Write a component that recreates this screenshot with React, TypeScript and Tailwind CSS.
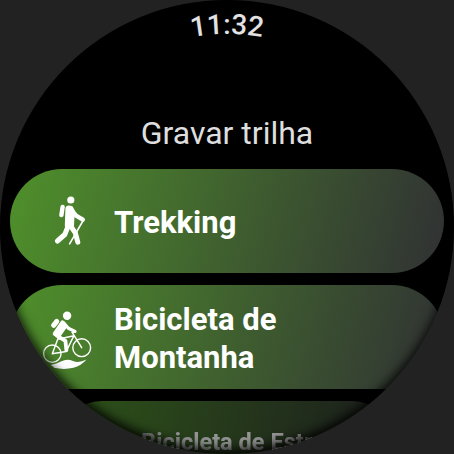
import type { ReactNode } from "react";

interface ActivityChipProps {
  label: string;
  icon?: ReactNode;
  receding?: boolean;
}

function HikerIcon() {
  return (
    <svg viewBox="0 0 50 64" className="w-full" fill="none" stroke="white" strokeLinecap="round" strokeLinejoin="round" aria-hidden="true">
      <circle cx="28.8" cy="11" r="3.6" fill="white" stroke="none" />
      <path d="M20.6 18 19.4 26" strokeWidth="4.4" />
      <path d="M24.8 20Q25 18 27 18L29.5 18.4 31.4 22 30.6 37 24.2 37Z" fill="white" strokeWidth="2.8" />
      <path d="M28.5 19.8 34 26.6 40.8 30.6" strokeWidth="4.4" />
      <path d="M26.2 37 22.8 45.5 15.4 52" strokeWidth="5" />
      <path d="M28.6 37 33.3 43.8 35.8 53.2" strokeWidth="5" />
      <path d="M40.6 32.5 27.6 54.8" strokeWidth="1.6" />
    </svg>
  );
}

function MountainBikeIcon() {
  return (
    <svg viewBox="0 0 50 64" className="w-full" fill="none" stroke="white" strokeLinecap="round" strokeLinejoin="round" aria-hidden="true">
      <circle cx="25.1" cy="10.8" r="4.2" fill="white" stroke="none" />
      <circle cx="10.3" cy="48.7" r="8.7" strokeWidth="1.4" />
      <circle cx="39.7" cy="42.7" r="8.9" strokeWidth="1.4" />
      <path d="M14.8 16.4 11.6 20.4" strokeWidth="5" />
      <path d="M20.6 17.8 23.2 20.8 16.8 30 13 28.8Z" fill="white" strokeWidth="4.6" />
      <path d="M21.5 18 26.3 23.2 33 26.4" strokeWidth="3.2" />
      <path d="M14.8 30.6 23.4 35.8 24.4 45.2" strokeWidth="3.8" />
      <path d="M10.3 48.7 16 33.5M10.3 48.7 24.2 46.5M17 34 31.8 30.8 24.2 46.5M30 27.2 39.7 42.7M30 27.2 33.5 27" strokeWidth="1.5" />
      <path d="M8.5 60Q15 58.5 19 56.5 25 53.5 31 56 37 58.5 44.5 54.6 39 61 31.5 62.8 22 65 12 62.8L11 61.4Z" fill="white" stroke="none" />
    </svg>
  );
}

function ActivityChip({ label, icon, receding }: ActivityChipProps) {
  return (
    <button
      type="button"
      className={`flex min-h-[104px] w-full items-center gap-[22px] rounded-[52px] bg-[linear-gradient(104deg,#4f902b,#303133)] pr-9 pl-8 text-left text-[31px] leading-[38px] font-bold text-white ${
        receding ? "origin-top scale-[0.76] brightness-[0.58]" : ""
      }`}
    >
      <span className="w-[50px] shrink-0">{icon}</span>
      <span className="pt-1">{label}</span>
    </button>
  );
}

function CurvedClock({ time }: { time: string }) {
  return (
    <svg viewBox="0 0 454 454" className="pointer-events-none absolute inset-0 w-full">
      <path id="clock-arc" d="M34 227A193 193 0 0 1 420 227" fill="none" />
      <text textAnchor="middle" className="fill-[#e2e2e2] text-[28px] font-medium">
        <textPath href="#clock-arc" startOffset="50%">{time}</textPath>
      </text>
    </svg>
  );
}

export default function App() {
  return (
    <div className="min-h-screen bg-[#222222] font-['Roboto',sans-serif]">
      <main className="relative aspect-square w-full overflow-hidden rounded-full bg-black">
        <div className="px-[10px] pt-[113px]">
          <h1 className="mb-4 text-center text-[32px] leading-10 text-[#dedede]">Gravar trilha</h1>
          <div className="flex flex-col gap-3">
            <ActivityChip label="Trekking" icon={<HikerIcon />} />
            <ActivityChip label="Bicicleta de Montanha" icon={<MountainBikeIcon />} />
            <ActivityChip label="Bicicleta de Estrada" receding />
          </div>
        </div>
        <div className="pointer-events-none absolute inset-0 rounded-full shadow-[inset_0_-6px_12px_-2px_black]" />
        <CurvedClock time="11:32" />
      </main>
    </div>
  );
}
